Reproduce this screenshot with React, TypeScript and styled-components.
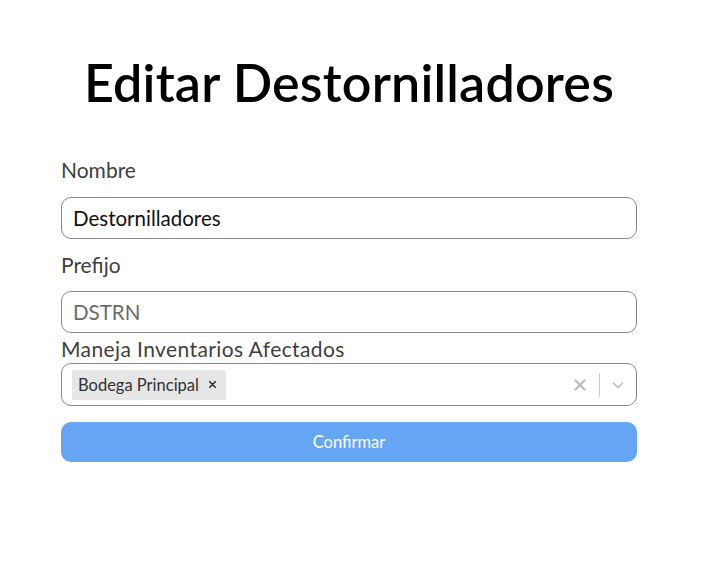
import React from "react";
import styled, { createGlobalStyle } from "styled-components";

const Global = createGlobalStyle`
  html, body { margin: 0; padding: 0; background: #fff; }
  body { font-family: "Lato", "Noto Sans", sans-serif; }
  * { box-sizing: border-box; }
`;

const Page = styled.div`
  width: 709px;
  height: 574px;
  padding-top: 52px;
  padding-left: 61px;
`;

const Form = styled.div`
  width: 576px;
  display: flex;
  flex-direction: column;
`;

const Title = styled.h1`
  margin: 0 0 46px 0;
  text-align: center;
  font-size: 52px;
  line-height: 60px;
  font-weight: 600;
  color: #000;
  letter-spacing: 0.2px;
`;

const Label = styled.label<{ $gap: number; $ls?: number }>`
  display: block;
  font-size: 21px;
  line-height: 24px;
  color: #404040;
  letter-spacing: ${(p) => p.$ls ?? 0}px;
  margin-bottom: ${(p) => p.$gap}px;
`;

const Field = styled.div<{ $mb: number }>`
  margin-bottom: ${(p) => p.$mb}px;
`;

const Input = styled.div<{ $placeholder?: boolean }>`
  height: 42px;
  border: 1px solid #8a8a8a;
  border-radius: 10px;
  padding: 0 11px;
  display: flex;
  align-items: center;
  font-size: 20.5px;
  color: ${(p) => (p.$placeholder ? "#6b6b6b" : "#111")};
`;

const Select = styled.div`
  height: 43px;
  border: 1px solid #8a8a8a;
  border-radius: 10px;
  display: flex;
  align-items: center;
  padding-left: 10px;
`;

const Values = styled.div`
  flex: 1;
  display: flex;
  align-items: center;
`;

const Tag = styled.div`
  height: 30px;
  background: #e6e6e6;
  border-radius: 2px;
  display: flex;
  align-items: center;
  padding: 0 8px 0 6px;
  gap: 8px;
  font-size: 16.5px;
  color: #333;
`;

const Indicators = styled.div`
  display: flex;
  align-items: center;
  height: 100%;
`;

const IconBox = styled.div<{ $w: number }>`
  width: ${(p) => p.$w}px;
  height: 100%;
  display: flex;
  align-items: center;
  justify-content: center;
`;

const Sep = styled.span`
  width: 1px;
  height: 24px;
  background: #cccccc;
`;

const Button = styled.button`
  margin-top: 16px;
  height: 40px;
  width: 100%;
  border: none;
  border-radius: 10px;
  background: #66a5f3;
  color: #fff;
  font-family: inherit;
  font-size: 16.5px;
`;

const X = ({ size, color, w }: { size: number; color: string; w: number }) => (
  <svg width={size} height={size} viewBox="0 0 20 20">
    <path d="M5 5 L15 15 M15 5 L5 15" stroke={color} strokeWidth={w} strokeLinecap="round" />
  </svg>
);

export default function App() {
  return (
    <>
      <Global />
      <Page>
        <Form>
          <Title>Editar Destornilladores</Title>
          <Field $mb={14}>
            <Label $gap={15}>Nombre</Label>
            <Input>Destornilladores</Input>
          </Field>
          <Field $mb={4}>
            <Label $gap={14}>Prefijo</Label>
            <Input $placeholder>DSTRN</Input>
          </Field>
          <Field $mb={0}>
            <Label $gap={2} $ls={0.4}>Maneja Inventarios Afectados</Label>
            <Select>
              <Values>
                <Tag>
                  Bodega Principal
                  <X size={11} color="#333" w={3} />
                </Tag>
              </Values>
              <Indicators>
                <IconBox $w={38}>
                  <X size={18} color="#bdbdbd" w={2.6} />
                </IconBox>
                <Sep />
                <IconBox $w={36}>
                  <svg width="18" height="18" viewBox="0 0 20 20">
                    <path d="M5 8 L10 13 L15 8" fill="none" stroke="#c4c4c4" strokeWidth="2" strokeLinecap="round" strokeLinejoin="round" />
                  </svg>
                </IconBox>
              </Indicators>
            </Select>
          </Field>
          <Button>Confirmar</Button>
        </Form>
      </Page>
    </>
  );
}
